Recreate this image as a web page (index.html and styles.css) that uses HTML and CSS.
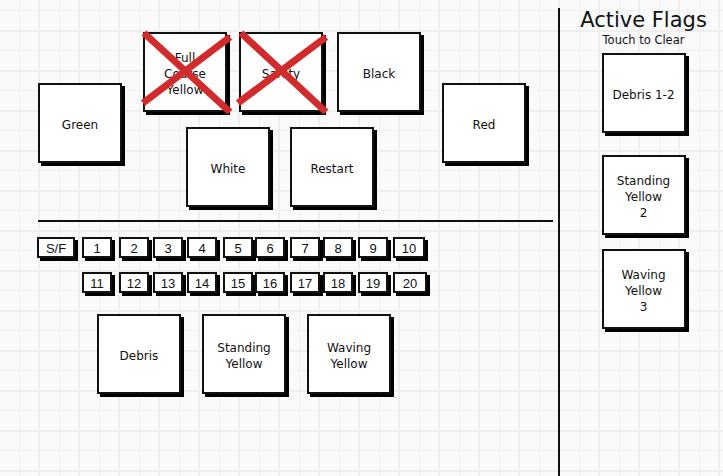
FILE: index.html
```html
<!DOCTYPE html>
<html>
<head>
<meta charset="utf-8">
<link rel="stylesheet" href="styles.css">
</head>
<body>
<div class="page">
  <main class="left">
    <section class="flags">
      <div class="btn flag-side">Green</div>
      <div class="flag-middle">
        <div class="row row-top">
          <div class="btn struck">Full<br>Course<br>Yellow
            <svg class="cross" viewBox="0 0 88 82"><line x1="1" y1="1" x2="87" y2="80"/><line x1="87" y1="5" x2="0" y2="71"/></svg>
          </div>
          <div class="btn struck">Safety
            <svg class="cross" viewBox="0 0 88 82"><line x1="2" y1="1" x2="87" y2="80"/><line x1="87" y1="5" x2="-1" y2="71"/></svg>
          </div>
          <div class="btn btn-black">Black</div>
        </div>
        <div class="row row-bottom">
          <div class="btn">White</div>
          <div class="btn">Restart</div>
        </div>
      </div>
      <div class="btn flag-side">Red</div>
    </section>

    <hr class="rule">

    <section class="numbers">
      <div class="num num-sf">S/F</div>
      <div class="num">1</div>
      <div class="num">2</div>
      <div class="num">3</div>
      <div class="num">4</div>
      <div class="num">5</div>
      <div class="num">6</div>
      <div class="num">7</div>
      <div class="num">8</div>
      <div class="num">9</div>
      <div class="num num-wide">10</div>
      <div class="num num-row2">11</div>
      <div class="num">12</div>
      <div class="num">13</div>
      <div class="num">14</div>
      <div class="num">15</div>
      <div class="num">16</div>
      <div class="num">17</div>
      <div class="num">18</div>
      <div class="num">19</div>
      <div class="num num-wide2">20</div>
    </section>

    <section class="types">
      <div class="btn">Debris</div>
      <div class="btn">Standing<br>Yellow</div>
      <div class="btn">Waving<br>Yellow</div>
    </section>
  </main>

  <div class="divider"></div>

  <aside class="panel">
    <h1 class="panel-title">Active Flags</h1>
    <p class="panel-sub">Touch to Clear</p>
    <div class="btn active-1">Debris 1-2</div>
    <div class="btn active-2">Standing<br>Yellow<br>2</div>
    <div class="btn active-3">Waving<br>Yellow<br>3</div>
  </aside>
</div>
</body>
</html>
```

FILE: styles.css
```css
html, body {
  margin: 0;
  padding: 0;
}

body {
  width: 723px;
  height: 476px;
  overflow: hidden;
  font-family: "DejaVu Sans", sans-serif;
  color: #111;
  background-color: #fafafa;
  background-image:
    linear-gradient(to right, #eeeeee 2px, transparent 2px),
    linear-gradient(to bottom, #eeeeee 2px, transparent 2px),
    linear-gradient(to right, #f2f2f2 1px, transparent 1px),
    linear-gradient(to bottom, #f2f2f2 1px, transparent 1px);
  background-size: 40px 40px, 40px 40px, 20px 20px, 20px 20px;
  background-position: 38px 0, 0 30px, 19px 0, 0 10px;
}

.page {
  display: flex;
  height: 476px;
}

.left {
  width: 520px;
  padding: 32px 0 0 38px;
  flex: none;
}

.btn {
  position: relative;
  box-sizing: border-box;
  width: 84px;
  height: 80px;
  padding-top: 3px;
  background: #fff;
  border: 2px solid #111;
  box-shadow: 3px 3px 0 #000;
  display: flex;
  align-items: center;
  justify-content: center;
  text-align: center;
  font-size: 12px;
  line-height: 16px;
  flex: none;
}

.flags {
  display: flex;
  gap: 21px;
  align-items: flex-start;
}

.flag-side {
  margin-top: 51px;
}

.flag-middle {
  display: flex;
  flex-direction: column;
  gap: 15px;
}

.row {
  display: flex;
}

.row-top {
  gap: 12px;
}

.row-top .btn-black {
  margin-left: 2px;
}

.row-bottom {
  gap: 20px;
  padding-left: 43px;
}

.cross {
  position: absolute;
  left: -2px;
  top: -2px;
  width: 88px;
  height: 82px;
  overflow: visible;
}

.cross line {
  stroke: #d22b2b;
  stroke-width: 7;
}

.rule {
  margin: 13px 0 0 0;
  width: 515px;
  height: 2px;
  border: 0;
  background: #111;
}

.numbers {
  margin-top: 15px;
  display: grid;
  grid-template-columns: 45px 37px 34px 34px 36px 32px 35px 33px 35px 35px 40px;
  row-gap: 14px;
  margin-left: -1px;
}

.num {
  box-sizing: border-box;
  width: 30px;
  height: 21px;
  padding-top: 1px;
  background: #fff;
  border: 2px solid #111;
  box-shadow: 3px 3px 0 #000;
  display: flex;
  align-items: center;
  justify-content: center;
  font-family: "Liberation Sans", Arial, sans-serif;
  font-size: 13px;
}

.num-sf {
  width: 38px;
}

.num-wide {
  width: 32px;
}

.num-wide2 {
  width: 34px;
}

.num-row2 {
  grid-column-start: 2;
}

.types {
  margin: 21px 0 0 59px;
  display: flex;
  gap: 21px;
}

.divider {
  flex: none;
  width: 2px;
  margin: 8px 0 0 0;
  background: #111;
}

.panel {
  flex: 1;
  padding: 8px 0 0 4px;
  display: flex;
  flex-direction: column;
  align-items: center;
}

.panel-title {
  margin: 0;
  font-size: 21px;
  font-weight: normal;
  line-height: 25px;
}

.panel-sub {
  margin: 0;
  font-size: 11.5px;
  line-height: 14px;
}

.active-1 {
  margin-top: 6px;
}

.active-2 {
  margin-top: 22px;
}

.active-3 {
  margin-top: 14px;
}
```
